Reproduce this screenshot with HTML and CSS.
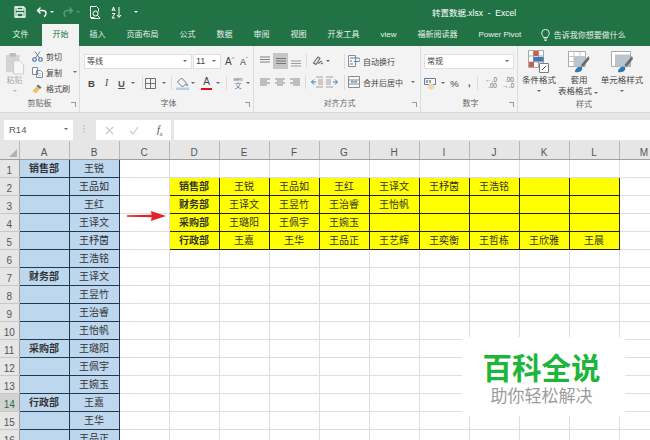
FILE: index.html
```html
<!DOCTYPE html>
<html lang="zh-CN">
<head>
    <meta charset="UTF-8">
    <title>转置数据.xlsx - Excel</title>
    <link rel="stylesheet" href="styles.css">
</head>
<body>
<div class="title-bar">
    <svg class="qat-save" width="12" height="12" viewBox="0 0 12 12"><path d="M1 1h8.5L11 2.500V11H1zM3 1v3h6V1M3 11V7h6v4" fill="none" stroke="#fff" stroke-width="1.300"/></svg>
    <svg class="qat-undo" width="12" height="12" viewBox="0 0 12 12"><path d="M4.500 1.500 1.500 4.500l3 3M2 4.500h5a3 3 0 0 1 3 3c0 1.500-1 2.500-2 3" fill="none" stroke="#fff" stroke-width="1.400"/></svg>
    <span class="qat-caret"></span>
    <svg class="qat-redo" width="12" height="12" viewBox="0 0 12 12"><path d="M7.500 1.500l3 3-3 3M10 4.500H5a3 3 0 0 0-3 3c0 1.500 1 2.500 2 3" fill="none" stroke="#5f9c7d" stroke-width="1.400"/></svg>
    <span class="qat-caret dim"></span>
    <svg class="qat-preview" width="12" height="13" viewBox="0 0 12 13"><path d="M1.500.5h6l2 2v3M1.500.5v11h4" fill="none" stroke="#fff"/><circle cx="6.500" cy="7.500" r="2.500" fill="none" stroke="#fff"/><path d="M8.500 9.500l2.500 2.500M2 12.500h9" stroke="#fff"/></svg>
    <svg class="qat-sort" width="11" height="13" viewBox="0 0 11 13"><path d="M1 5l1.500-4L4 5M1.500 4h2M1 7.500h3L1 12h3M8 1v10M6 9l2 2.500L10 9" fill="none" stroke="#fff"/></svg>
    <span class="qat-caret end"></span>
    <div class="doc-title">转置数据.xlsx&nbsp; -&nbsp; Excel</div>
</div>

<div class="tab-bar">
    <a class="tab first">文件</a>
    <a class="tab active">开始</a>
    <a class="tab">插入</a>
    <a class="tab">页面布局</a>
    <a class="tab">公式</a>
    <a class="tab">数据</a>
    <a class="tab">审阅</a>
    <a class="tab">视图</a>
    <a class="tab">开发工具</a>
    <a class="tab">view</a>
    <a class="tab">福新阅读器</a>
    <a class="tab">Power Pivot</a>
    <a class="tab tell">
        <svg width="9" height="12" viewBox="0 0 9 12"><path d="M2.500 8.500C2.300 7 .7 6.300.7 4.200a3.800 3.800 0 0 1 7.600 0C8.300 6.300 6.700 7 6.500 8.500zM3 10h3M3.500 11.500h2" fill="none" stroke="#fff" stroke-width=".9"/></svg>
        告诉我你想要做什么
    </a>
</div>

<div class="ribbon">
    <div class="group g-clip">
        <div class="group-body clip-body">
            <div class="paste">
                <svg width="20" height="23" viewBox="0 0 22 25"><rect x="1" y="3" width="15" height="19" fill="#d4d4d4"/><rect x="5" y="1" width="7" height="4" fill="#bdbdbd"/><path d="M9.500 9.500H16l4.500 4.500v10h-11z" fill="#f7f7f7" stroke="#c8c8c8"/></svg>
                <span class="paste-label">粘贴</span>
                <span class="caret light"></span>
            </div>
            <div class="clip-list">
                <div class="tool">
                    <svg width="11" height="11" viewBox="0 0 11 11"><path d="M3 .5l4.500 6.500M8 .5L3.500 7" fill="none" stroke="#6c7f92" stroke-width="1"/><circle cx="2.500" cy="8.500" r="1.800" fill="none" stroke="#3f6f9f" stroke-width="1.100"/><circle cx="8.500" cy="8.500" r="1.800" fill="none" stroke="#3f6f9f" stroke-width="1.100"/></svg>
                    <span>剪切</span>
                </div>
                <div class="tool">
                    <svg width="11" height="11" viewBox="0 0 11 11"><path d="M.5.500h5v7h-5zM4.500 3.500h4l2 2v5h-6z" fill="#fbfbfb" stroke="#7d8b99"/><path d="M6 6.500h3M6 8.500h3" stroke="#9aa7b4" stroke-width=".7"/></svg>
                    <span>复制</span>
                    <span class="caret clip-caret"></span>
                </div>
                <div class="tool">
                    <svg width="11" height="11" viewBox="0 0 11 11"><path d="M6 1.500l3.500 3-1.500 1.500-3.500-3z" fill="#6b6b6b"/><path d="M4.500 3.500l3 2.500L4 10.500.5 8z" fill="#e8c268"/></svg>
                    <span>格式刷</span>
                </div>
            </div>
        </div>
        <div class="group-label">剪贴板<span class="launcher"></span></div>
    </div>

    <div class="group g-font">
        <div class="group-body">
            <div class="row">
                <div class="combo font-name">等线<span class="caret"></span></div>
                <div class="combo font-size">11<span class="caret"></span></div>
                <span class="grow-a">A<sup>^</sup></span>
                <span class="shrink-a">A<sup>ˇ</sup></span>
            </div>
            <div class="row second">
                <span class="tb bold">B</span>
                <span class="tb italic">I</span>
                <span class="tb under">U</span>
                <span class="caret"></span>
                <span class="sep ml5 mr2"></span>
                <svg width="11" height="11" viewBox="0 0 11 11"><path d="M.5.500h10v10H.500zM5.500.5v10M.5 5.500h10" fill="none" stroke="#6f6f6f"/></svg>
                <span class="caret ml4"></span>
                <span class="sep ml3 mr4"></span>
                <svg width="13" height="13" viewBox="0 0 13 13"><path d="M5.500 1l5 5-4 4-5-5z" fill="#f4f4f4" stroke="#777"/><path d="M0 10.500h13V13H0z" fill="#b4cfe8"/><circle cx="11" cy="8" r="1.300" fill="#88aacc"/></svg>
                <span class="caret"></span>
                <span class="font-color ml4">A</span>
                <span class="caret ml2"></span>
                <span class="sep ml4 mr5"></span>
                <span class="wen"><small>wén</small><span class="wen-char">文</span></span>
                <span class="caret"></span>
            </div>
        </div>
        <div class="group-label">字体<span class="launcher"></span></div>
    </div>

    <div class="group g-align">
        <div class="group-body">
            <div class="row tight">
                <div class="a-left">
                    <svg width="12" height="12" viewBox="0 0 12 12"><path d="M1 2h10M1 4.500h10M1 7h10" stroke="#808080"/></svg>
                    <span class="mid-active ml2"><svg width="12" height="12" viewBox="0 0 12 12"><path d="M1 3.500h10M1 6h10M1 8.500h10" stroke="#777"/></svg></span>
                    <svg class="ml2 low" width="12" height="12" viewBox="0 0 12 12"><path d="M1 5h10M1 7.500h10M1 10h10" stroke="#9a9a9a"/></svg>
                    <span class="sep ml4 mr5"></span>
                    <svg width="12" height="12" viewBox="0 0 12 12"><path d="M1.500 8L6 2l2 1.500L4 9.500zM6 8.500l4-2.500M9 9l2-1" fill="none" stroke="#666" stroke-width="1.100"/></svg>
                    <span class="caret"></span>
                </div>
                <span class="sep tall mr3"></span>
                <div class="tool">
                    <svg width="12" height="12" viewBox="0 0 12 12"><path d="M.5.500h7v11h-7z" fill="#f8f8f8" stroke="#8b8b8b"/><path d="M2 3h8.500a1.500 1.500 0 0 1 0 3.500H6M2 6h2M2 9h3" fill="none" stroke="#4d80b3"/></svg>
                    <span>自动换行</span>
                </div>
            </div>
            <div class="row second tight">
                <div class="a-left">
                    <svg width="12" height="12" viewBox="0 0 12 12"><path d="M1 3h10M1 5h7M1 7h10M1 9h7" stroke="#8a8a8a"/></svg>
                    <svg class="ml3" width="12" height="12" viewBox="0 0 12 12"><path d="M1 3h10M3 5h6M1 7h10M3 9h6" stroke="#8a8a8a"/></svg>
                    <svg class="ml3" width="12" height="12" viewBox="0 0 12 12"><path d="M1 3h10M4 5h7M1 7h10M4 9h7" stroke="#8a8a8a"/></svg>
                    <span class="sep ml4 mr5"></span>
                    <svg width="12" height="12" viewBox="0 0 12 12"><path d="M5 1h7M5 11h7M7 4h5M7 6h5M7 8h5" stroke="#a0a0a0"/><path d="M5 6H.5M3 3.500.5 6 3 8.500" fill="none" stroke="#3d7cb8"/></svg>
                    <svg class="ml3" width="12" height="12" viewBox="0 0 12 12"><path d="M0 1h7M0 11h7M0 4h5M0 6h5M0 8h5" stroke="#a0a0a0"/><path d="M7 6h4.500M9 3.500 11.500 6 9 8.500" fill="none" stroke="#3d7cb8"/></svg>
                </div>
                <span class="sep tall mr3"></span>
                <div class="tool">
                    <svg width="12" height="12" viewBox="0 0 12 12"><path d="M.5.500h11v11H.500zM.5 4h11M.5 8h11" fill="#f8f8f8" stroke="#8b8b8b"/><path d="M3 6h6M3 6l1.500-1M9 6 7.500 5" stroke="#4d80b3" fill="none"/></svg>
                    <span>合并后居中</span>
                    <span class="caret merge-caret"></span>
                </div>
            </div>
        </div>
        <div class="group-label">对齐方式<span class="launcher"></span></div>
    </div>

    <div class="group g-num">
        <div class="group-body">
            <div class="row">
                <div class="combo num-format">常规<span class="caret"></span></div>
            </div>
            <div class="row second">
                <svg width="13" height="13" viewBox="0 0 13 13"><path d="M.5 1.500h11v6H.500z" fill="#f5f5f5" stroke="#5b7fa5"/><path d="M3 3v3M6 3v3" stroke="#345"/><circle cx="7" cy="9.500" r="3" fill="#eed9a0"/></svg>
                <span class="caret ml2"></span>
                <span class="percent ml2">%</span>
                <span class="comma">,</span>
                <span class="sep num-sep"></span>
                <span class="dec"><b>←</b>.0<br>.00</span>
                <span class="dec ml3">.00<br><b>→</b>.0</span>
            </div>
        </div>
        <div class="group-label">数字<span class="launcher"></span></div>
    </div>

    <div class="group g-style">
        <div class="group-body style-body">
            <div class="style-col c1">
                <svg width="22" height="24" viewBox="0 0 22 24"><path d="M.5.500h15v17H.500zM5.500.5v17M10.500.5v17M.5 6h15M.5 12h15" fill="#fff" stroke="#a8a8a8"/><path d="M5.500 1h5v5h-5zM1 12h5v5H1z" fill="#c8604a"/><path d="M5.500 7h10v4.500h-10z" fill="#3f78b4"/><path d="M11.500 13.500h9v9h-9z" fill="#fff" stroke="#7d7d7d"/><path d="M14 20l4-4" stroke="#555"/></svg>
                <span>条件格式</span>
                <span class="caret"></span>
            </div>
            <div class="style-col c2">
                <svg width="22" height="24" viewBox="0 0 22 24"><path d="M.5 1.500h17v15H.500z" fill="#fff" stroke="#a8a8a8"/><path d="M.5 6.500h17M6 1.500v15M12 1.500v15M.5 11.500h17" stroke="#c6c6c6"/><path d="M6 6.500h11.500v10H6z" fill="#b9c4ce"/><path d="M20.500 6 13 15l2 2 6.500-8z" fill="#6a6a6a"/><path d="M7 22c0-4 4-6 7-5 1 3-1 6-7 5z" fill="#2f75b5"/></svg>
                <span>套用</span>
                <span>表格格式<i class="caret inline"></i></span>
            </div>
            <div class="style-col c3">
                <svg width="22" height="24" viewBox="0 0 22 24"><path d="M.5 1.500h19v15H.500z" fill="#fff" stroke="#a8a8a8"/><path d="M4 4.500h15v12H4z" fill="#b9c4ce"/><path d="M21 6l-7.500 9 2 2L22 9z" fill="#6a6a6a"/><path d="M7 22c0-4 4-6 7-5 1 3-1 6-7 5z" fill="#2f75b5"/></svg>
                <span>单元格样式</span>
                <span class="caret"></span>
            </div>
        </div>
        <div class="group-label">样式</div>
    </div>
</div>

<div class="formula-bar">
    <div class="name-box">R14<span class="caret"></span></div>
    <span class="grip"></span>
    <div class="fx-box">
        <svg width="9" height="9" viewBox="0 0 9 9"><path d="M1 1l7 7M8 1 1 8" stroke="#c9c9c9" stroke-width="1.200"/></svg>
        <svg width="10" height="9" viewBox="0 0 10 9"><path d="M1 5l3 3 5-7" fill="none" stroke="#c9c9c9" stroke-width="1.200"/></svg>
        <span class="fx">f<sub>x</sub></span>
    </div>
    <div class="formula-input"></div>
</div>

<div class="sheet">
    <table class="grid">
        <colgroup>
            <col class="col-head">
            <col span="13" class="col-cell">
        </colgroup>
        <thead>
            <tr>
                <th class="corner"><span class="corner-mark"></span></th>
                <th>A</th><th>B</th><th>C</th><th>D</th><th>E</th><th>F</th><th>G</th><th>H</th><th>I</th><th>J</th><th>K</th><th>L</th><th>M</th>
            </tr>
        </thead>
        <tbody>
            <tr><th>1</th><td class="blue dept">销售部</td><td class="blue">王锐</td><td></td><td></td><td></td><td></td><td></td><td></td><td></td><td></td><td></td><td></td><td></td></tr>
            <tr><th>2</th><td class="blue"></td><td class="blue">王品如</td><td></td><td class="yellow dept">销售部</td><td class="yellow">王锐</td><td class="yellow">王品如</td><td class="yellow">王红</td><td class="yellow">王译文</td><td class="yellow">王杼茵</td><td class="yellow">王浩铭</td><td class="yellow"></td><td class="yellow"></td><td></td></tr>
            <tr><th>3</th><td class="blue"></td><td class="blue">王红</td><td></td><td class="yellow dept">财务部</td><td class="yellow">王译文</td><td class="yellow">王昱竹</td><td class="yellow">王治睿</td><td class="yellow">王怡帆</td><td class="yellow"></td><td class="yellow"></td><td class="yellow"></td><td class="yellow"></td><td></td></tr>
            <tr><th>4</th><td class="blue"></td><td class="blue">王译文</td><td></td><td class="yellow dept">采购部</td><td class="yellow">王璐阳</td><td class="yellow">王佩宇</td><td class="yellow">王婉玉</td><td class="yellow"></td><td class="yellow"></td><td class="yellow"></td><td class="yellow"></td><td class="yellow"></td><td></td></tr>
            <tr><th>5</th><td class="blue"></td><td class="blue">王杼茵</td><td></td><td class="yellow dept">行政部</td><td class="yellow">王嘉</td><td class="yellow">王华</td><td class="yellow">王品正</td><td class="yellow">王艺辉</td><td class="yellow">王奕衡</td><td class="yellow">王哲栋</td><td class="yellow">王欣雅</td><td class="yellow">王晨</td><td></td></tr>
            <tr><th>6</th><td class="blue"></td><td class="blue">王浩铭</td><td></td><td></td><td></td><td></td><td></td><td></td><td></td><td></td><td></td><td></td><td></td></tr>
            <tr><th>7</th><td class="blue dept">财务部</td><td class="blue">王译文</td><td></td><td></td><td></td><td></td><td></td><td></td><td></td><td></td><td></td><td></td><td></td></tr>
            <tr><th>8</th><td class="blue"></td><td class="blue">王昱竹</td><td></td><td></td><td></td><td></td><td></td><td></td><td></td><td></td><td></td><td></td><td></td></tr>
            <tr><th>9</th><td class="blue"></td><td class="blue">王治睿</td><td></td><td></td><td></td><td></td><td></td><td></td><td></td><td></td><td></td><td></td><td></td></tr>
            <tr><th>10</th><td class="blue"></td><td class="blue">王怡帆</td><td></td><td></td><td></td><td></td><td></td><td></td><td></td><td></td><td></td><td></td><td></td></tr>
            <tr><th>11</th><td class="blue dept">采购部</td><td class="blue">王璐阳</td><td></td><td></td><td></td><td></td><td></td><td></td><td></td><td></td><td></td><td></td><td></td></tr>
            <tr><th>12</th><td class="blue"></td><td class="blue">王佩宇</td><td></td><td></td><td></td><td></td><td></td><td></td><td></td><td></td><td></td><td></td><td></td></tr>
            <tr><th>13</th><td class="blue"></td><td class="blue">王婉玉</td><td></td><td></td><td></td><td></td><td></td><td></td><td></td><td></td><td></td><td></td><td></td></tr>
            <tr><th class="row-on">14</th><td class="blue dept">行政部</td><td class="blue">王嘉</td><td></td><td></td><td></td><td></td><td></td><td></td><td></td><td></td><td></td><td></td><td></td></tr>
            <tr><th>15</th><td class="blue"></td><td class="blue">王华</td><td></td><td></td><td></td><td></td><td></td><td></td><td></td><td></td><td></td><td></td><td></td></tr>
            <tr><th>16</th><td class="blue"></td><td class="blue">王品正</td><td></td><td></td><td></td><td></td><td></td><td></td><td></td><td></td><td></td><td></td><td></td></tr>
        </tbody>
    </table>

    <svg class="red-arrow" width="40" height="12" viewBox="0 0 42 12" preserveAspectRatio="none"><path d="M0 5.200 26 4.800 25 1l16 5-16 5 1-3.800L0 6.800z" fill="#e0232e"/></svg>

    <div class="watermark">
        <div class="wm-title">百科全说</div>
        <div class="wm-sub">助你轻松解决</div>
    </div>
</div>
</body>
</html>
```

FILE: styles.css
```css
body {
    font-family: "Liberation Sans", "Noto Sans CJK SC", sans-serif;
    margin: 0;
    width: 650px;
    height: 440px;
    overflow: hidden;
    background: #fff;
    color: #444;
    font-size: 8px;
}
svg {
    display: block;
    flex: none;
}

/* title bar and tabs */
.title-bar {
    height: 24px;
    background: #217346;
    display: flex;
    align-items: center;
    color: #fff;
}
.qat-save { margin-left: 14px; }
.qat-undo { margin-left: 10px; }
.qat-redo { margin-left: 8px; }
.qat-preview { margin-left: 9px; }
.qat-sort { margin-left: 10px; }
.qat-caret {
    width: 0;
    height: 0;
    margin-left: 2px;
    border: 2px solid transparent;
    border-top-color: #fff;
    border-bottom: 0;
}
.qat-caret.dim { border-top-color: #5f9c7d; }
.qat-caret.end { margin-left: 12px; }
.doc-title {
    margin-left: 294px;
    font-size: 8.5px;
    white-space: nowrap;
}
.tab-bar {
    height: 22px;
    background: #217346;
    display: flex;
    padding-left: 2px;
}
.tab {
    padding: 0 10.500px;
    color: #e8f2ec;
    line-height: 21px;
    white-space: nowrap;
}
.tab.first { margin-right: 3px; }
.tab.active {
    background: #f3f3f3;
    color: #217346;
}
.tab.tell {
    display: flex;
    align-items: center;
    gap: 4px;
    padding-left: 9px;
}

/* ribbon */
.ribbon {
    height: 66px;
    background: #f3f3f3;
    border-bottom: 1px solid #d6d6d6;
    display: flex;
    box-sizing: content-box;
}
.group {
    display: flex;
    flex-direction: column;
    border-right: 1px solid #dcdcdc;
    box-sizing: border-box;
}
.group-body {
    flex: 1;
    padding-top: 8px;
}
.group-label {
    position: relative;
    height: 16px;
    line-height: 15px;
    text-align: center;
    color: #666;
}
.launcher {
    position: absolute;
    right: 3px;
    top: 6px;
    width: 5px;
    height: 5px;
    border-left: 1px solid #999;
    border-bottom: 1px solid #999;
    box-sizing: border-box;
    transform: scaleX(-1) scaleY(-1);
}
.g-clip { width: 80px; }
.g-font { width: 174px; padding-left: 4px; }
.g-align { width: 167px; padding-left: 5px; }
.g-num { width: 97px; padding-left: 3px; }
.g-style { width: 132px; border-right: 0; }

.row {
    display: flex;
    align-items: center;
    height: 15px;
}
.row.second {
    height: 14px;
    margin-top: 7px;
}
.row.tight {
    height: 14px;
}
.caret {
    flex: none;
    width: 8px;
    height: 3px;
    position: relative;
}
.caret::after {
    content: "";
    position: absolute;
    left: 2px;
    top: 0;
    border: 2px solid transparent;
    border-top-color: #666;
    border-bottom: 0;
}
.caret.light::after { border-top-color: #b8b8b8; }
.caret.inline {
    display: inline-block;
    vertical-align: middle;
}
.sep {
    flex: none;
    width: 1px;
    height: 14px;
    background: #dcdcdc;
}
.sep.tall { height: 15px; }
.ml2 { margin-left: 2px; }
.ml3 { margin-left: 3px; }
.ml4 { margin-left: 4px; }
.ml5 { margin-left: 5px; }
.mr2 { margin-right: 2px; }
.mr3 { margin-right: 3px; }
.mr4 { margin-right: 4px; }
.mr5 { margin-right: 5px; }

/* clipboard */
.clip-body {
    display: flex;
    padding-top: 4px;
}
.paste {
    width: 33px;
    display: flex;
    flex-direction: column;
    align-items: center;
    padding-top: 2px;
    padding-right: 3px;
    box-sizing: border-box;
}
.paste-label {
    color: #aaa;
    line-height: 11px;
    margin-top: 0;
}
.paste .caret { margin-top: 4px; }
.clip-list {
    display: flex;
    flex-direction: column;
    gap: 4px;
    padding-top: 0;
}
.tool {
    display: flex;
    align-items: center;
    gap: 3px;
    height: 12px;
    white-space: nowrap;
    color: #444;
}
.clip-caret { margin-left: 6px; }
.merge-caret { margin-left: 3px; }

/* font */
.combo {
    position: relative;
    height: 15px;
    box-sizing: border-box;
    background: #fff;
    border: 1px solid #dfdfdf;
    padding-left: 2px;
    line-height: 13px;
}
.combo .caret {
    position: absolute;
    right: 2px;
    top: 5px;
}
.font-name { width: 108px; }
.font-size { width: 28px; margin-left: 1px; font-size: 9px; }
.grow-a,
.shrink-a {
    font-size: 10px;
    margin-left: 4px;
    width: 12px;
    white-space: nowrap;
}
.shrink-a { font-size: 9px; margin-left: 3px; }
.grow-a sup,
.shrink-a sup {
    font-size: 6px;
    color: #c07a2c;
    line-height: 0;
}
.tb {
    flex: none;
    width: 15px;
    text-align: center;
    font-size: 9.500px;
}
.bold { font-weight: 700; }
.italic { font-style: italic; font-family: "Liberation Serif", serif; }
.under { text-decoration: underline; font-weight: 700; color: #555; }
.font-color {
    flex: none;
    width: 11px;
    height: 13px;
    line-height: 10px;
    font-size: 10px;
    text-align: center;
    box-sizing: border-box;
    border-bottom: 2px solid #e0101a;
}
.wen {
    flex: none;
    width: 12px;
    text-align: center;
    color: #5b7fa5;
}
.wen small {
    display: block;
    font-size: 5px;
    line-height: 5px;
    color: #666;
}
.wen-char {
    display: block;
    font-size: 7px;
    line-height: 8px;
}

/* alignment */
.a-left {
    flex: none;
    display: flex;
    align-items: center;
    width: 85px;
}
.mid-active {
    flex: none;
    display: flex;
    align-items: center;
    justify-content: center;
    width: 15px;
    height: 16px;
    background: #c6c6c6;
}
.low { margin-top: 2px; }

/* number */
.num-format { width: 90px; }
.percent { font-size: 9.500px; width: 11px; text-align: center; }
.comma { margin-left: 8px; font-size: 9px; font-weight: 700; line-height: 9px; width: 4px; }
.num-sep { margin-left: 5px; margin-right: 5px; }
.dec {
    flex: none;
    width: 14px;
    font-size: 6.500px;
    line-height: 6.500px;
    text-align: right;
    color: #666;
}
.dec b { color: #3d7cb8; font-weight: 400; }

/* styles */
.style-body {
    display: flex;
    padding-top: 4px;
}
.style-col {
    display: flex;
    flex-direction: column;
    align-items: center;
    font-size: 8.500px;
    line-height: 11px;
    white-space: nowrap;
}
.style-col svg { margin-bottom: 1px; }
.style-col .caret { margin-top: 4px; }
.c1 { width: 42px; }
.c2 { width: 38px; }
.c3 { width: 48px; }

/* formula bar */
.formula-bar {
    height: 28px;
    box-sizing: border-box;
    background: #e6e6e6;
    display: flex;
    padding: 7px 0 1px 4px;
}
.name-box {
    position: relative;
    width: 69px;
    background: #fff;
    font-size: 9.500px;
    line-height: 19px;
    padding-left: 5px;
    box-sizing: border-box;
    color: #555;
}
.name-box .caret {
    position: absolute;
    right: 3px;
    top: 8px;
}
.grip {
    width: 2px;
    height: 8px;
    margin: 5px 11px 0 10px;
    border-left: 2px dotted #cfcfcf;
    box-sizing: border-box;
}
.fx-box {
    width: 75px;
    display: flex;
    align-items: center;
    background: #fff;
    padding-left: 9px;
    gap: 15px;
    box-sizing: border-box;
}
.fx {
    font-family: "Liberation Serif", serif;
    font-style: italic;
    font-size: 10px;
    color: #444;
    margin-left: 3px;
}
.fx sub { font-size: 6px; }
.formula-input {
    flex: 1;
    background: #fff;
    margin-left: 3px;
}

/* sheet */
.sheet {
    position: relative;
    height: 300px;
    overflow: hidden;
}
.grid {
    border-collapse: collapse;
    table-layout: fixed;
    width: 669px;
    font-size: 10px;
    color: #333;
}
.col-head { width: 19px; }
.col-cell { width: 50px; }
.grid tr { height: 18px; }
.grid td {
    padding: 0;
    border: 1px solid #dedede;
    text-align: center;
    line-height: 17px;
    overflow: hidden;
    white-space: nowrap;
}
.grid th {
    padding: 0;
    background: #e6e6e6;
    font-weight: 400;
    color: #555;
    border: 1px solid #c8c8c8;
    border-width: 0 1px 1px 0;
    vertical-align: bottom;
    line-height: 13px;
    font-size: 10px;
}
.grid thead th {
    border-bottom: 1px solid #9f9f9f;
    border-right-color: #b8b8b8;
}
.grid tbody th { border-right: 1px solid #9f9f9f; }
.grid .row-on {
    background: #d2d2d2;
    color: #217346;
}
.corner { position: relative; }
.corner-mark {
    position: absolute;
    right: 2px;
    bottom: 2px;
    border: 4px solid transparent;
    border-right-color: #b4b4b4;
    border-bottom-color: #b4b4b4;
}
.grid td.blue {
    background: #bdd7ee;
    border-color: #24384c;
}
.grid td.yellow {
    background: #ffff00;
    border-color: #222;
}
.dept { font-weight: 700; }
.red-arrow {
    position: absolute;
    left: 127px;
    top: 69px;
}
.watermark {
    position: absolute;
    left: 462px;
    top: 196px;
    width: 159px;
    height: 79px;
    padding-right: 4px;
    background: #fff;
    text-align: center;
}
.wm-title {
    font-size: 29.500px;
    font-weight: 700;
    line-height: 36px;
    margin-top: 14px;
    color: #1db53a;
}
.wm-sub {
    font-size: 17px;
    line-height: 20px;
    margin-top: 0;
    color: #9c9c9c;
}
```
